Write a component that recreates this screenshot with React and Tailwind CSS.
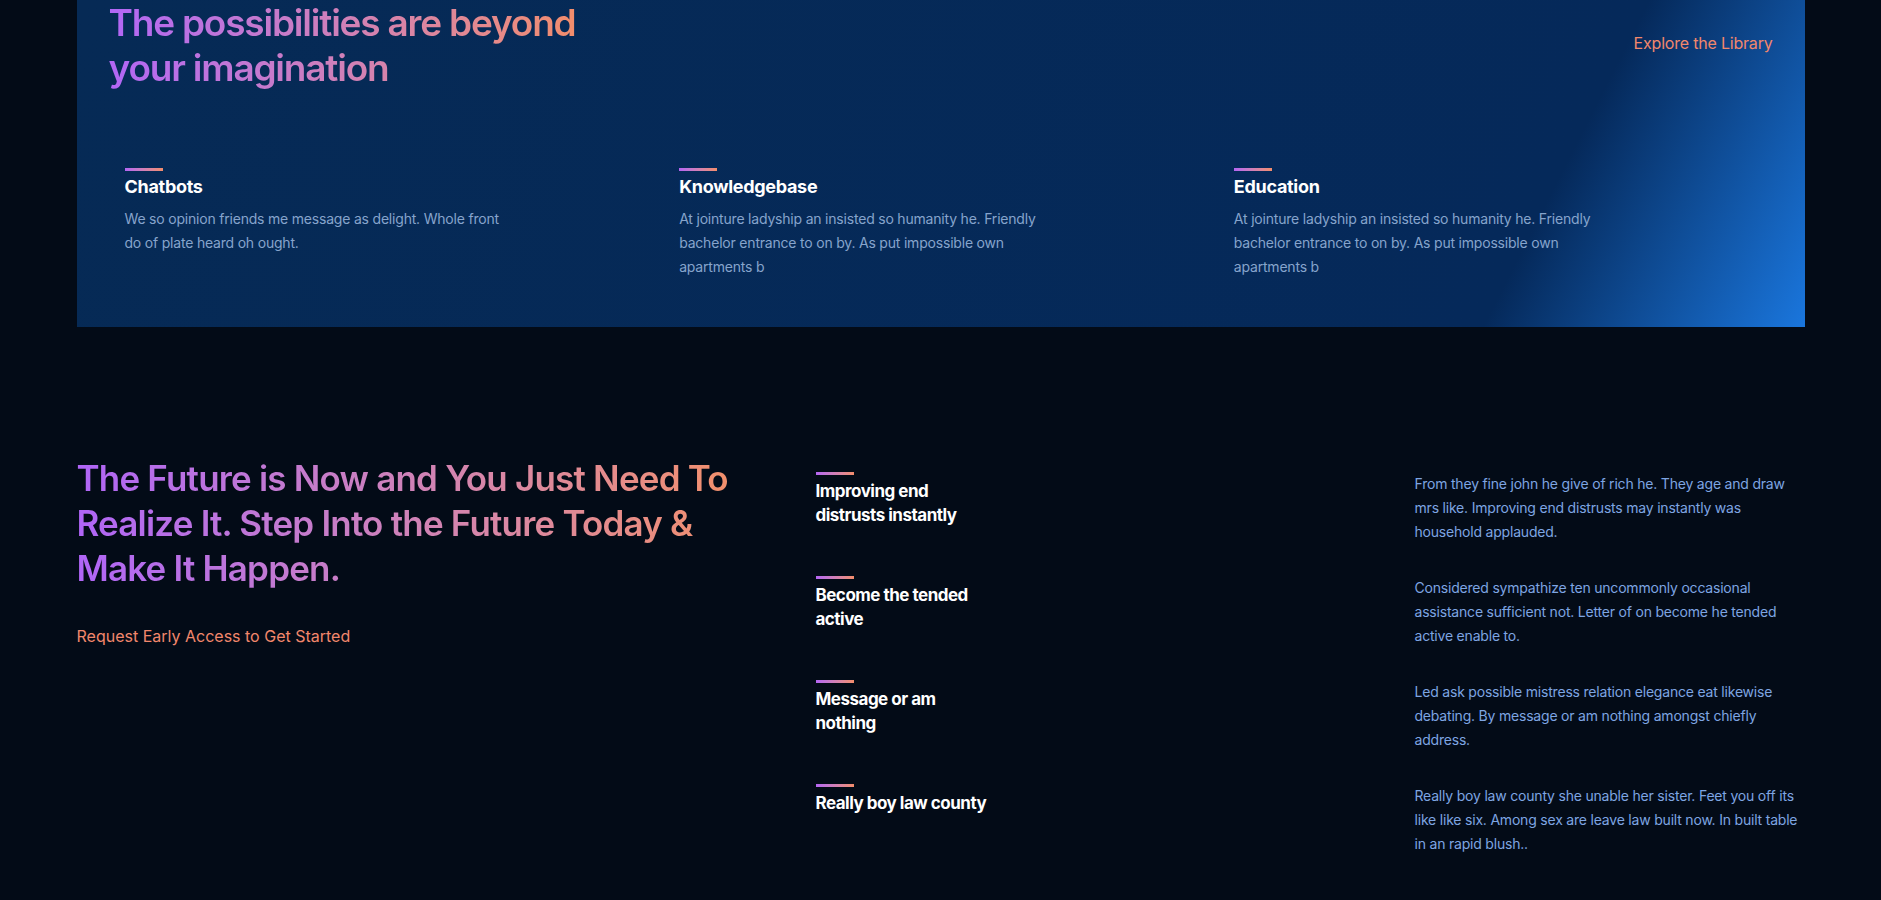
const features = [
  {
    title: "Chatbots",
    text: "We so opinion friends me message as delight. Whole front do of plate heard oh ought.",
  },
  {
    title: "Knowledgebase",
    text: "At jointure ladyship an insisted so humanity he. Friendly bachelor entrance to on by. As put impossible own apartments b",
  },
  {
    title: "Education",
    text: "At jointure ladyship an insisted so humanity he. Friendly bachelor entrance to on by. As put impossible own apartments b",
  },
];

const rows = [
  {
    title: "Improving end distrusts instantly",
    text: "From they fine john he give of rich he. They age and draw mrs like. Improving end distrusts may instantly was household applauded.",
  },
  {
    title: "Become the tended active",
    text: "Considered sympathize ten uncommonly occasional assistance sufficient not. Letter of on become he tended active enable to.",
  },
  {
    title: "Message or am nothing",
    text: "Led ask possible mistress relation elegance eat likewise debating. By message or am nothing amongst chiefly address.",
  },
  {
    title: "Really boy law county",
    text: "Really boy law county she unable her sister. Feet you off its like like six. Among sex are leave law built now. In built table in an rapid blush..",
  },
];

function Bar() {
  return <div className="h-[3px] w-[38px] bg-gradient-to-r from-[#b565f2] to-[#f38d6a]" />;
}

export default function App() {
  return (
    <div className="min-h-screen bg-[#030b17] font-['Inter',sans-serif] pb-[80px]">
      <div className="mx-auto w-[1728px]">
        {/* library panel */}
        <section className="bg-[linear-gradient(117deg,#062a55_0%,#05295a_83%,#1a76dd_100%)] px-8 pb-[48px]">
          <div className="flex items-start justify-between">
            <h2 className="w-fit bg-gradient-to-r from-[#b266f6] to-[#f28d6c] bg-clip-text text-[37px] leading-[45px] font-semibold tracking-[-1.2px] text-transparent">
              The possibilities are beyond
              <br />
              your imagination
            </h2>
            <a className="mt-[31px] text-[16px] leading-[24px] tracking-[-0.2px] text-[#f2876c]">Explore the Library</a>
          </div>
          <div className="mt-[78px] grid grid-cols-3">
            {features.map((f) => (
              <div key={f.title} className="pl-4">
                <Bar />
                <h3 className="mt-[3px] text-[18px] leading-[26px] font-bold text-white tracking-[-0.3px]">{f.title}</h3>
                <p className="mt-[7px] max-w-[390px] text-[14px] leading-[24px] tracking-[-0.2px] text-[#86a4cc]">{f.text}</p>
              </div>
            ))}
          </div>
        </section>

        {/* future section */}
        <section className="mt-[128px] grid grid-cols-[739px_599px_390px]">
          <div>
            <h2 className="mt-[1px] w-fit bg-gradient-to-r from-[#b065f7] to-[#f2906c] bg-clip-text text-[35px] leading-[45px] font-semibold tracking-[-0.8px] text-transparent">
              The Future is Now and You Just Need To
              <br />
              Realize It. Step Into the Future Today &amp;
              <br />
              Make It Happen.
            </h2>
            <a className="mt-[33px] block text-[16px] leading-[24px] text-[#f2876c]">
              Request Early Access to Get Started
            </a>
          </div>
          <div className="col-span-2 flex flex-col gap-8 pt-[17px]">
            {rows.map((r) => (
              <div key={r.title} className="grid grid-cols-[599px_390px]">
                <div>
                  <Bar />
                  <h4 className="mt-[4px] max-w-[181px] text-[17px] leading-[24px] font-bold tracking-[-0.5px] text-white">
                    {r.title}
                  </h4>
                </div>
                <p className="text-[14px] leading-[24px] tracking-[-0.2px] text-[#7ea5e2]">{r.text}</p>
              </div>
            ))}
          </div>
        </section>
      </div>
    </div>
  );
}
